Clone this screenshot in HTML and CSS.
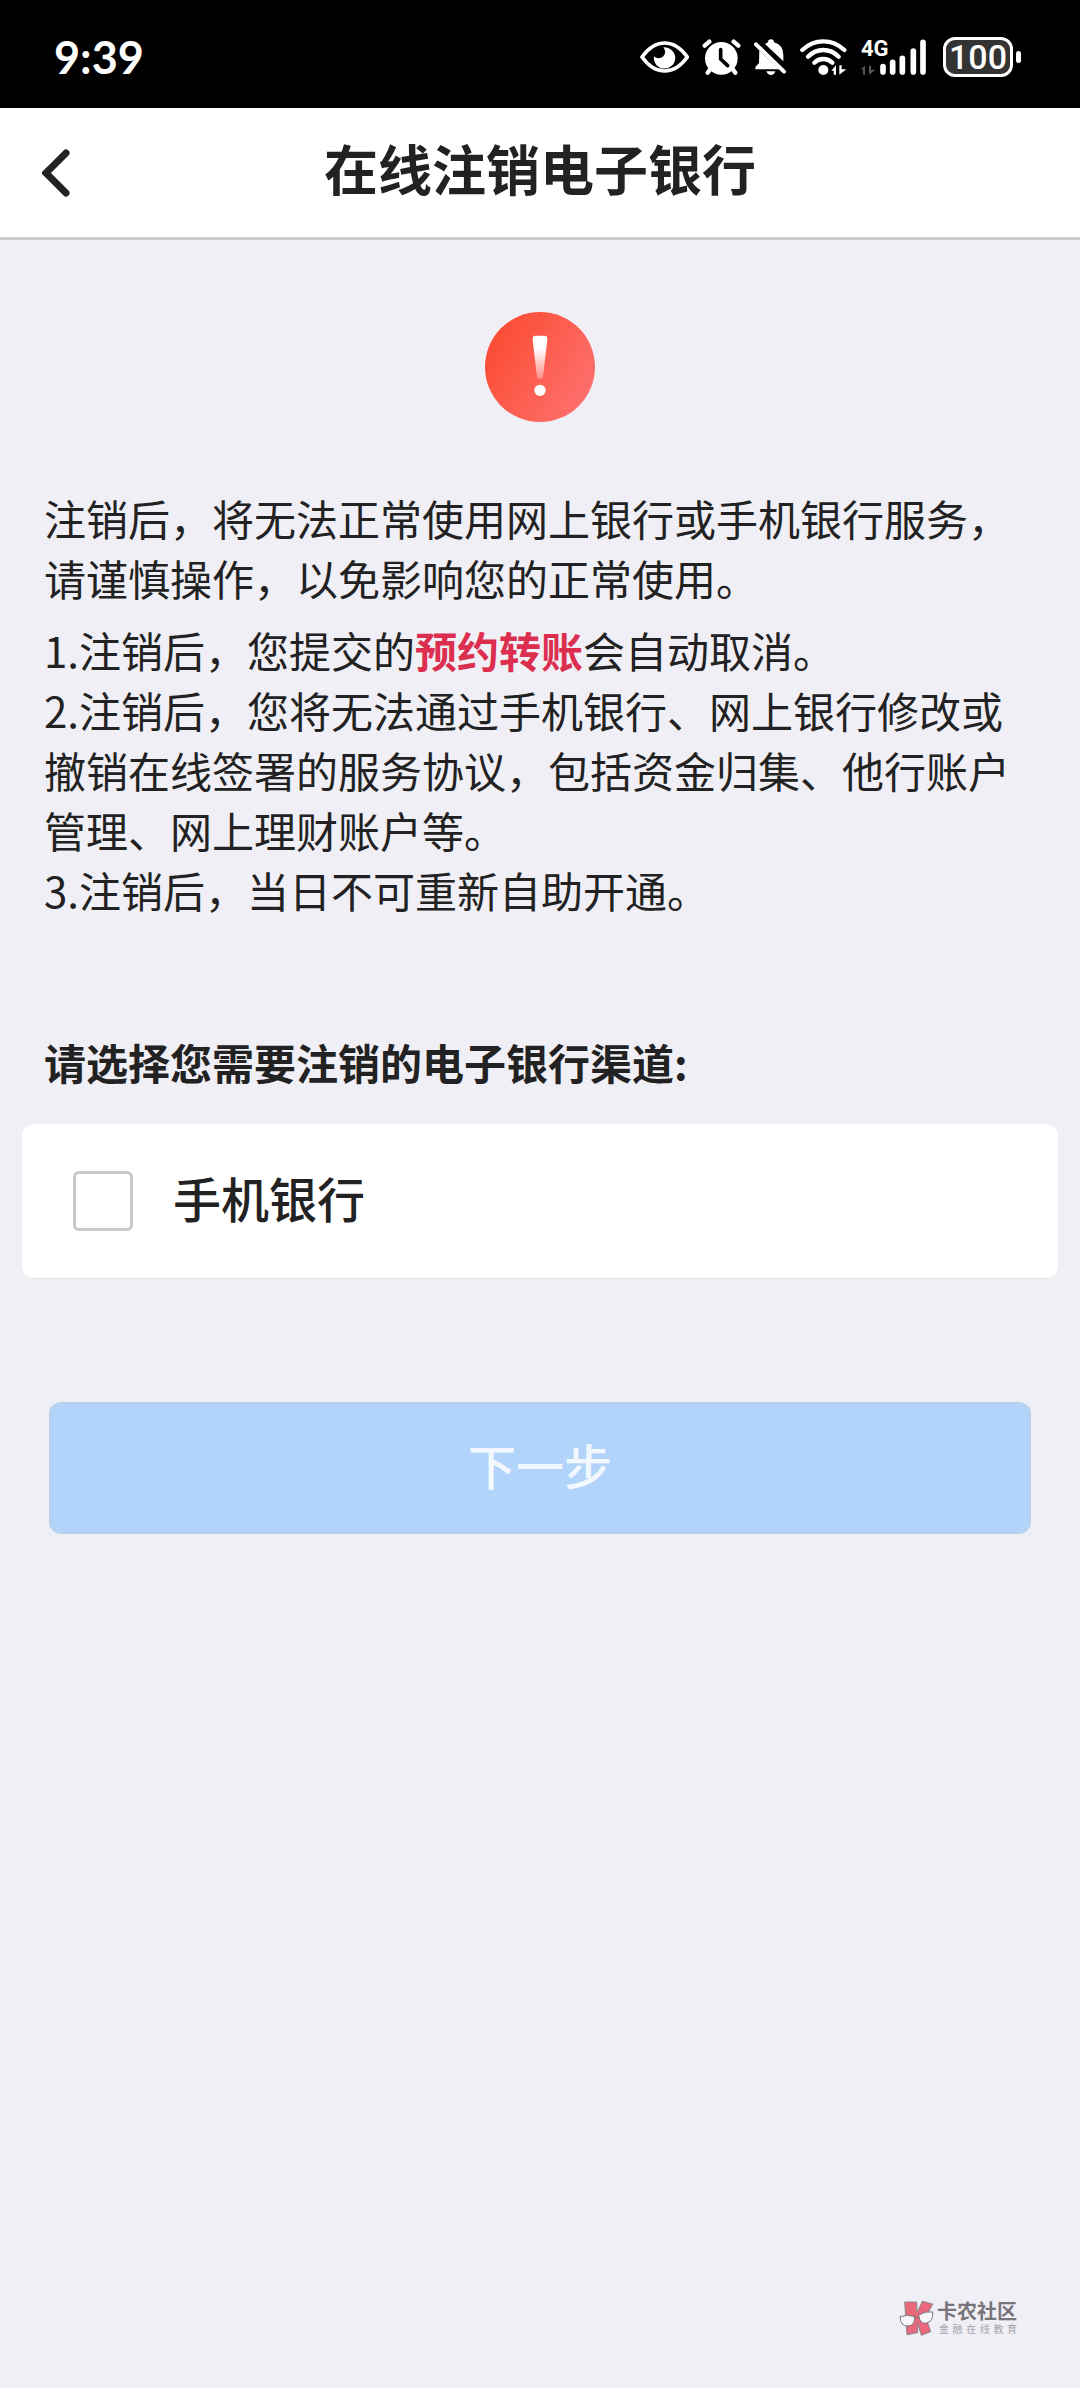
FILE: index.html
```html
<!DOCTYPE html>
<html lang="zh-CN">
  <head>
    <meta charset="UTF-8" />
    <meta name="viewport" content="width=device-width, initial-scale=1.0" />
    <title>在线注销电子银行</title>
    <link rel="stylesheet" href="styles.css">
  </head>
  <body>
    <div class="statusBar">
      <span class="time">9:39</span>
      <div class="statusIcons">
        <svg class="eye" width="49" height="36" viewBox="0 0 147 108">
          <path d="M6 54Q36 12 74 12T142 54Q112 96 74 96T6 54Z" fill="none" stroke="#fff" stroke-width="11" />
          <path d="M70 25A32 32 0 1 1 42 52A16 16 0 0 0 70 25Z" fill="#fff" />
        </svg>
        <svg class="alarm" width="39" height="36" viewBox="0 0 117 108">
          <g stroke="#fff" stroke-width="13" stroke-linecap="round">
            <path d="M8 20L22 8M109 20L95 8M25 90L17 101M92 90L100 101" />
          </g>
          <circle cx="58" cy="58" r="49" fill="#fff" />
          <path d="M56 32V60L77 80" fill="none" stroke="#000" stroke-width="11" stroke-linecap="round" />
        </svg>
        <svg class="bell" width="33" height="36" viewBox="0 0 99 108">
          <path d="M16 34L75 91H4V84L15 72Z" fill="#fff" />
          <path d="M33 15L42 10Q42 1 51 1T60 10Q88 18 88 48V67Z" fill="#fff" />
          <path d="M37 97H64Q61 108 51 108T37 97Z" fill="#fff" />
          <path d="M6 16L90 98" stroke="#fff" stroke-width="12" stroke-linecap="round" />
        </svg>
        <svg class="wifi" width="48" height="36" viewBox="0 0 144 108">
          <g fill="none" stroke="#fff" stroke-width="13" stroke-linecap="round">
            <path d="M7 33Q34 7 70 7T133 33" />
            <path d="M24 53Q44 33 70 33T116 53" />
            <path d="M43 71Q54 60 70 60T97 71" />
          </g>
          <circle cx="70" cy="93" r="15" fill="#fff" />
          <path d="M94 95L108 79V107H101V95ZM118 79H125V91H139L118 107Z" fill="#fff" />
        </svg>
        <div class="signal">
          <span class="network">4G</span>
          <svg width="46" height="36" viewBox="0 0 138 108">
            <path d="M0 91L12 80V107H6V92ZM24 80H30V92H44L24 107Z" fill="#555" />
            <g stroke="#fff" stroke-width="17" stroke-linecap="round">
              <path d="M66 83V99M95 70V99M124 58V99" />
            </g>
          </svg>
          <svg width="17" height="36" viewBox="0 0 51 108">
            <path d="M10 36V99M39 10V99" stroke="#fff" stroke-width="17" stroke-linecap="round" />
          </svg>
        </div>
        <div class="battery">100</div>
      </div>
    </div>

    <header>
      <button type="button" class="back" aria-label="返回">
        <svg width="28" height="48" viewBox="0 0 28 48">
          <path d="M24 4L4 24L24 44" fill="none" stroke="#222" stroke-width="7" stroke-linecap="round" />
        </svg>
      </button>
      <h1>在线注销电子银行</h1>
    </header>

    <main>
      <svg class="warning" width="110" height="110" viewBox="0 0 330 330">
        <defs>
          <linearGradient id="red" x1="0" y1="0.2" x2="1" y2="0.8">
            <stop offset="0" stop-color="#fb4a30" />
            <stop offset="1" stop-color="#fd7270" />
          </linearGradient>
          <linearGradient id="fade" x1="0" y1="0" x2="0" y2="1">
            <stop offset="0.3" stop-color="#fff" />
            <stop offset="1" stop-color="#fff" stop-opacity="0.3" />
          </linearGradient>
        </defs>
        <circle cx="165" cy="165" r="165" fill="url(#red)" />
        <path d="M152 71H178Q188 71 187 83L174 194Q173 201 165 201T156 194L143 83Q142 71 152 71Z" fill="url(#fade)" />
        <circle cx="165" cy="235" r="17" fill="#fff" />
      </svg>

      <div class="notice">
        <p class="intro">注销后，将无法正常使用网上银行或手机银行服务，请谨慎操作，以免影响您的正常使用。</p>
        <p>1.注销后，您提交的<strong>预约转账</strong>会自动取消。</p>
        <p>2.注销后，您将无法通过手机银行、网上银行修改或撤销在线签署的服务协议，包括资金归集、他行账户管理、网上理财账户等。</p>
        <p>3.注销后，当日不可重新自助开通。</p>
      </div>

      <form>
        <h2>请选择您需要注销的电子银行渠道:</h2>
        <div class="channel">
          <input type="checkbox" id="mobileBank" />
          <label for="mobileBank">手机银行</label>
        </div>
        <button type="submit" class="nextBtn" disabled>下一步</button>
      </form>
    </main>

    <footer>
      <svg width="36" height="36" viewBox="0 0 108 108">
        <g fill="#e9687b" stroke="#8b8589" stroke-width="3">
          <path d="M17 6H53L54 38L70 4L101 12L80 52L95 95L67 106L56 70V98L24 104Z" />
        </g>
        <g fill="#f7f6fa" stroke="#77757a" stroke-width="3">
          <path d="M3 50Q26 42 47 50Q48 78 26 78T3 50Z" />
          <path d="M59 45Q80 32 101 36Q104 64 83 69T59 45Z" />
          <path d="M47 54L60 50" />
        </g>
      </svg>
      <div class="brand">
        <span class="brandName">卡农社区</span>
        <span class="brandSub">金融在线教育</span>
      </div>
    </footer>
  </body>
</html>
```
FILE: styles.css
```css
* {
  margin: 0;
  padding: 0;
  box-sizing: border-box;
}

body {
  display: flex;
  flex-direction: column;
  min-height: 100vh;
  background-color: #f0eff5;
  color: #222;
  font-family: "Noto Sans CJK SC", sans-serif;
}

/* status bar */
.statusBar {
  display: flex;
  justify-content: space-between;
  align-items: center;
  height: 108px;
  padding: 6px 67px 0 54px;
  background-color: #000;
  color: #fff;
}

.time {
  font-family: Lato, sans-serif;
  font-size: 45px;
  font-weight: bold;
}

.statusIcons {
  display: flex;
  align-items: center;
  gap: 13px;
}

.signal {
  display: flex;
  position: relative;
  gap: 3px;
}

.network {
  position: absolute;
  top: 0;
  left: 0;
  font-family: Roboto, sans-serif;
  font-size: 22px;
  font-weight: bold;
  line-height: 20px;
}

.battery {
  position: relative;
  width: 70px;
  height: 40px;
  margin-left: 3px;
  border: 3px solid #fff;
  border-radius: 12px;
  background-color: #333;
  font-family: Roboto, sans-serif;
  font-size: 34px;
  font-weight: 500;
  line-height: 34px;
  text-align: center;
}

.battery::after {
  content: "";
  position: absolute;
  top: 11px;
  right: -11px;
  width: 5px;
  height: 12px;
  border-radius: 3px;
  background-color: #fff;
}

/* title bar */
header {
  display: grid;
  grid-template-columns: 112px 1fr 112px;
  align-items: center;
  height: 132px;
  border-bottom: 3px solid #ccc;
  background-color: #fff;
}

.back {
  display: flex;
  padding: 20px 42px;
  border: none;
  background: none;
  cursor: pointer;
}

h1 {
  padding-bottom: 10px;
  font-size: 54px;
  font-weight: bold;
  line-height: 80px;
  text-align: center;
}

/* content */
main {
  padding: 72px 22px 0;
}

.warning {
  display: block;
  margin: 0 auto 66px;
}

.notice {
  padding: 0 22px;
  font-size: 42px;
  line-height: 60px;
}

.intro {
  margin-bottom: 12px;
}

strong {
  color: #dc2f50;
}

h2 {
  margin: 112px 22px 32px;
  font-size: 42px;
  font-weight: bold;
  line-height: 60px;
}

.channel {
  display: flex;
  align-items: center;
  gap: 40px;
  height: 155px;
  padding: 0 51px;
  border-bottom: 1px solid #e4e4e8;
  border-radius: 12px;
  background-color: #fff;
}

input {
  appearance: none;
  width: 60px;
  height: 60px;
  border: 3px solid #c8c8c8;
  border-radius: 6px;
  background-color: #fff;
  &:checked {
    background-color: #3d96f5;
  }
}

label {
  padding-bottom: 8px;
  font-size: 48px;
  font-weight: 500;
  line-height: 60px;
}

.nextBtn {
  display: block;
  width: calc(100% - 54px);
  height: 132px;
  margin: 123px auto 0;
  padding-bottom: 8px;
  border: 3px solid #b6d2f0;
  border-radius: 12px;
  background-color: #b2d4fa;
  color: #f2f8fe;
  font-family: inherit;
  font-size: 48px;
  font-weight: 500;
}

/* watermark */
footer {
  display: flex;
  justify-content: flex-end;
  align-items: center;
  gap: 2px;
  margin-top: auto;
  padding: 0 63px 52px 0;
}

.brand {
  display: flex;
  flex-direction: column;
  width: 80px;
}

.brandName {
  color: #77757a;
  font-size: 20px;
  font-weight: bold;
  line-height: 22px;
}

.brandSub {
  padding-left: 2px;
  color: #a5a3aa;
  font-size: 10px;
  line-height: 14px;
  text-align-last: justify;
}
```
